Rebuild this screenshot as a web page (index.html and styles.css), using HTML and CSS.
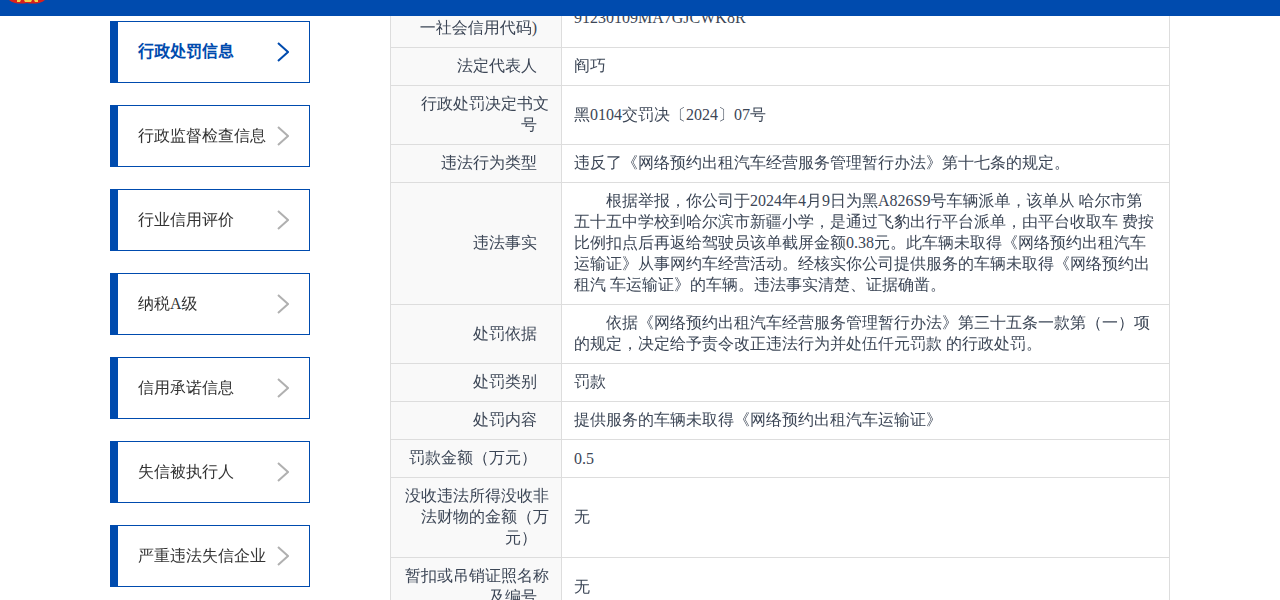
FILE: index.html
```html
<!DOCTYPE html>
<html lang="zh-CN">
<head>
<meta charset="utf-8">
<title>行政处罚信息</title>
<link rel="stylesheet" href="styles.css">
</head>
<body>
<header class="topbar">
  <svg class="emblem" viewBox="0 0 38 4" aria-hidden="true">
    <path d="M1 0H37Q35 2 31 3Q25 4 19 3Q13 4 7 3Q3 2 1 0Z" fill="#d9201c"/>
    <path d="M9 0h4l-1 2h-3zM16 0h8l-1 2h-6zM26 0h4v2h-3z" fill="#f3d34a"/>
  </svg>
</header>
<div class="page">
  <nav class="side">
    <a class="side-link active" href="#penalty">行政处罚信息<svg class="arrow" viewBox="0 0 12 20" aria-hidden="true"><path d="M1 1L11 10L1 19"/></svg></a>
    <a class="side-link" href="#inspect">行政监督检查信息<svg class="arrow" viewBox="0 0 12 20" aria-hidden="true"><path d="M1 1L11 10L1 19"/></svg></a>
    <a class="side-link" href="#rating">行业信用评价<svg class="arrow" viewBox="0 0 12 20" aria-hidden="true"><path d="M1 1L11 10L1 19"/></svg></a>
    <a class="side-link" href="#tax">纳税A级<svg class="arrow" viewBox="0 0 12 20" aria-hidden="true"><path d="M1 1L11 10L1 19"/></svg></a>
    <a class="side-link" href="#promise">信用承诺信息<svg class="arrow" viewBox="0 0 12 20" aria-hidden="true"><path d="M1 1L11 10L1 19"/></svg></a>
    <a class="side-link" href="#debtor">失信被执行人<svg class="arrow" viewBox="0 0 12 20" aria-hidden="true"><path d="M1 1L11 10L1 19"/></svg></a>
    <a class="side-link" href="#serious">严重违法失信企业<svg class="arrow" viewBox="0 0 12 20" aria-hidden="true"><path d="M1 1L11 10L1 19"/></svg></a>
  </nav>
  <main class="content">
    <table class="detail">
      <colgroup><col class="col-label"><col></colgroup>
      <tbody>
      <tr><th scope="row">行政相对人代码(统一社会信用代码)&nbsp;&nbsp;&nbsp;</th><td>91230109MA7GJCWK8R</td></tr>
      <tr><th scope="row">法定代表人&nbsp;&nbsp;&nbsp;</th><td>阎巧</td></tr>
      <tr><th scope="row">行政处罚决定书文号&nbsp;&nbsp;&nbsp;</th><td>黑0104交罚决〔2024〕07号</td></tr>
      <tr><th scope="row">违法行为类型&nbsp;&nbsp;&nbsp;</th><td>违反了《网络预约出租汽车经营服务管理暂行办法》第十七条的规定。</td></tr>
      <tr><th scope="row">违法事实&nbsp;&nbsp;&nbsp;</th><td class="indent">根据举报，你公司于2024年4月9日为黑A826S9号车辆派单，该单从 哈尔市第五十五中学校到哈尔滨市新疆小学，是通过飞豹出行平台派单，由平台收取车 费按比例扣点后再返给驾驶员该单截屏金额0.38元。此车辆未取得《网络预约出租汽车运输证》从事网约车经营活动。经核实你公司提供服务的车辆未取得《网络预约出租汽 车运输证》的车辆。违法事实清楚、证据确凿。</td></tr>
      <tr><th scope="row">处罚依据&nbsp;&nbsp;&nbsp;</th><td class="indent">依据《网络预约出租汽车经营服务管理暂行办法》第三十五条一款第（一）项的规定，决定给予责令改正违法行为并处伍仟元罚款 的行政处罚。</td></tr>
      <tr><th scope="row">处罚类别&nbsp;&nbsp;&nbsp;</th><td>罚款</td></tr>
      <tr><th scope="row">处罚内容&nbsp;&nbsp;&nbsp;</th><td>提供服务的车辆未取得《网络预约出租汽车运输证》</td></tr>
      <tr><th scope="row">罚款金额（万元）&nbsp;&nbsp;&nbsp;</th><td>0.5</td></tr>
      <tr><th scope="row">没收违法所得没收非法财物的金额（万元）&nbsp;&nbsp;&nbsp;</th><td>无</td></tr>
      <tr><th scope="row">暂扣或吊销证照名称及编号&nbsp;&nbsp;&nbsp;</th><td>无</td></tr>
      </tbody>
    </table>
  </main>
</div>
</body>
</html>
```
FILE: styles.css
```css
* { box-sizing: border-box; }

body {
  height: 100vh;
  margin: 0;
  overflow: hidden;
  background: #fff;
  color: #3c4656;
  font-family: "Liberation Serif", "Droid Sans Fallback", "WenQuanYi Zen Hei", "Noto Sans CJK SC", serif;
  font-size: 16px;
  line-height: normal;
}

.topbar {
  position: fixed;
  inset: 0 0 auto;
  z-index: 2;
  height: 16px;
  background: #004bae;
}

.emblem {
  display: block;
  width: 38px;
  height: 4px;
  margin-left: 8px;
}

.page {
  display: flex;
  justify-content: space-between;
  align-items: flex-start;
  max-width: 1060px;
  margin: 0 auto;
}

.side {
  display: flex;
  flex-direction: column;
  gap: 22px;
  width: 200px;
  padding-top: 21px;
}

.side-link {
  display: flex;
  align-items: center;
  justify-content: space-between;
  height: 62px;
  padding: 0 20px;
  border: 1px solid #004bae;
  border-left-width: 8px;
  color: #333;
  line-height: 22px;
  text-decoration: none;
  white-space: nowrap;
}

.side-link.active {
  color: #004bae;
  font-family: "Liberation Serif", serif;
  font-weight: bold;
}

.arrow {
  flex: none;
  width: 12px;
  height: 20px;
  fill: none;
  stroke: #b0b0b0;
  stroke-width: 2;
}

.active .arrow { stroke: #004bae; }

.content {
  width: 780px;
  margin-top: -12px;
}

.detail {
  width: 100%;
  border-collapse: collapse;
  table-layout: fixed;
}

.col-label { width: 171px; }

.detail th,
.detail td {
  padding: 8px 12px;
  border: 1px solid #ddd;
  vertical-align: middle;
  font-weight: normal;
  text-align: left;
}

.detail th {
  background: #f9f9f9;
  text-align: right;
}

.detail .indent { text-indent: 2em; }
```
